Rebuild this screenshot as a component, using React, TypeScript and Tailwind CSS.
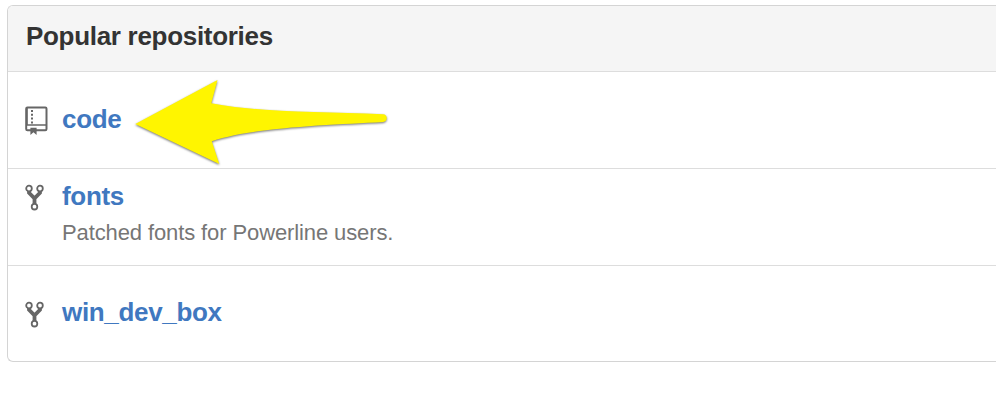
import type { ReactNode } from "react";

function RepoIcon() {
  return (
    <svg className="block h-[30px] w-6" viewBox="0 0 24 30" fill="none" aria-hidden="true">
      <rect x="2.2" y="1.5" width="20.3" height="22.7" rx="1.2" stroke="#666" strokeWidth="2" />
      <path d="M3 2V19" stroke="#666" strokeWidth="1.6" />
      <path d="M2 19H22" stroke="#666" strokeWidth="1.6" />
      <path d="M7 4h2v2H7zM7 7.8h2v2H7zM7 11.6h2v2H7zM7 15.4h2v2H7z" fill="#666" />
      <path d="M6.4 21.8h6.2v7.2l-3.1-2.7-3.1 2.7z" fill="#666" />
    </svg>
  );
}

function ForkIcon() {
  return (
    <svg className="block h-[30px] w-6" viewBox="0 0 24 30" fill="none" stroke="#666" aria-hidden="true">
      <path d="M5 8v1.8l5.5 5.5V21M16 8v1.8l-5.5 5.5" strokeWidth="3.8" />
      <g fill="#fff" strokeWidth="1.8">
        <circle cx="5" cy="5.5" r="2.8" />
        <circle cx="16" cy="5.5" r="2.8" />
        <circle cx="10.5" cy="23.7" r="2.8" />
      </g>
    </svg>
  );
}

function Row({ icon, name, description, className }: { icon: ReactNode; name: string; description?: string; className: string }) {
  return (
    <li className={`flex h-[97px] border-t border-[#ddd] pl-4 ${className}`}>
      <div className="w-[38px] shrink-0 pt-[3px]">{icon}</div>
      <div>
        <a className="block text-[26px] leading-[32px] font-bold tracking-[-0.33px] text-[#4078c0]">{name}</a>
        {description && <p className="mt-[5px] text-[22px] leading-[32px] tracking-[-0.11px] text-[#767676]">{description}</p>}
      </div>
    </li>
  );
}

export default function App() {
  return (
    <main className="relative h-[404px] w-full overflow-hidden bg-white pt-[5px] pl-[7px] font-['Liberation_Sans',Arial,sans-serif]">
      <section className="h-[357px] overflow-hidden rounded-l-md border border-r-0 border-[#d4d4d4]">
        <h2 className="h-[65px] bg-[#f5f5f5] pt-[14px] pl-[18px] text-[26px] leading-[32px] font-bold tracking-[-0.3px] text-[#333]">Popular repositories</h2>
        <ul>
          <Row icon={<RepoIcon />} name="code" className="pt-[31px]" />
          <Row icon={<ForkIcon />} name="fonts" description="Patched fonts for Powerline users." className="pt-[11px]" />
          <Row icon={<div className="pt-px"><ForkIcon /></div>} name="win_dev_box" className="pt-[30px]" />
        </ul>
      </section>
      <svg className="absolute top-[70px] left-[120px] h-[105px] w-[280px] drop-shadow-[0_1px_1px_rgba(0,0,0,0.55)]" viewBox="0 0 280 105" aria-hidden="true">
        <path d="M15.3 54 97.5 10.1 91.3 33.3C140 42.5 200 42 263 44.2c5 0 5 7.5 0 7.8C210 55 135 57 91.8 71.2L99.3 94Z" fill="#fff500" />
      </svg>
    </main>
  );
}
